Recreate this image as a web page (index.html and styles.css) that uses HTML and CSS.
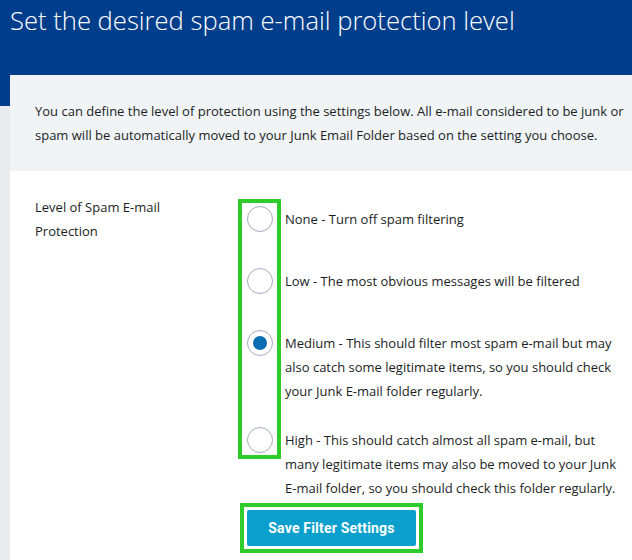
FILE: index.html
```html
<!DOCTYPE html>
<html lang="en">
<head>
<meta charset="utf-8">
<title>Spam protection level</title>
<link rel="stylesheet" href="styles.css">
</head>
<body>
<header class="page-header">
  <h1 class="page-title">Set the desired spam e-mail protection level</h1>
</header>
<main class="card">
  <section class="intro">
    <p>You can define the level of protection using the settings below. All e-mail considered to be junk or spam will be automatically moved to your Junk Email Folder based on the setting you choose.</p>
  </section>
  <form class="form">
    <div class="form-label">Level of Spam E-mail Protection</div>
    <div class="form-field">
      <div class="options">
        <span class="highlight highlight-radios"></span>
        <label class="option">
          <span class="radio-cell"><input type="radio" name="level" class="radio"></span>
          <span class="option-text">None - Turn off spam filtering</span>
        </label>
        <label class="option">
          <span class="radio-cell"><input type="radio" name="level" class="radio"></span>
          <span class="option-text">Low - The most obvious messages will be filtered</span>
        </label>
        <label class="option">
          <span class="radio-cell"><input type="radio" name="level" class="radio" checked></span>
          <span class="option-text">Medium - This should filter most spam e-mail but may also catch some legitimate items, so you should check your Junk E-mail folder regularly.</span>
        </label>
        <label class="option">
          <span class="radio-cell"><input type="radio" name="level" class="radio"></span>
          <span class="option-text">High - This should catch almost all spam e-mail, but many legitimate items may also be moved to your Junk E-mail folder, so you should check this folder regularly.</span>
        </label>
      </div>
      <div class="button-frame">
        <button type="button" class="save-btn">Save Filter Settings</button>
      </div>
    </div>
  </form>
</main>
</body>
</html>
```
FILE: styles.css
```css
html, body {
  margin: 0;
  padding: 0;
}
body {
  background: linear-gradient(#003e8c 0, #003e8c 106px, #e9ecef 106px);
  font-family: "Open Sans", "Liberation Sans", sans-serif;
  color: #1b1e24;
  min-height: 560px;
}
.page-header {
  height: 75px;
  box-sizing: border-box;
  padding: 3px 0 0 10px;
}
.page-title {
  margin: 0;
  color: #ffffff;
  font-family: "Open Sans", sans-serif;
  font-weight: 300;
  font-size: 25.6px;
  line-height: 36px;
  letter-spacing: 0;
}
.card {
  margin-left: 10px;
  background: #ffffff;
  min-height: 485px;
}
.intro {
  background: #f1f4f7;
  padding: 24px 2px 24px 25px;
}
.intro p {
  margin: 0;
  font-size: 13px;
  line-height: 24px;
}
.form {
  display: flex;
  padding: 24px 0 0 25px;
  font-size: 13px;
  line-height: 24px;
}
.form-label {
  width: 203px;
  flex: none;
  padding-right: 50px;
  box-sizing: border-box;
}
.form-field {
  display: flex;
  flex-direction: column;
  padding-top: 12px;
}
.options {
  position: relative;
  display: flex;
  flex-direction: column;
  gap: 25px;
}
.option {
  display: flex;
  align-items: flex-start;
  min-height: 37px;
  cursor: pointer;
}
.radio-cell {
  width: 43px;
  flex: none;
  display: flex;
  justify-content: center;
  margin-right: 4px;
}
.radio {
  appearance: none;
  -webkit-appearance: none;
  margin: 0;
  width: 26px;
  height: 26px;
  border: 1.5px solid #a3abba;
  border-radius: 50%;
  background: #ffffff;
  box-sizing: border-box;
  display: grid;
  place-content: center;
  margin-top: -1px;
}
.radio:checked::before {
  content: "";
  width: 14px;
  height: 14px;
  border-radius: 50%;
  background: #0a6db3;
}
.option-text {
  width: 336px;
}
.highlight {
  position: absolute;
  border: 4px solid #2ecb2b;
  pointer-events: none;
}
.highlight-radios {
  left: 0;
  top: -8px;
  width: 35px;
  height: 252px;
}
.button-frame {
  align-self: flex-start;
  margin: 3px 0 0 2px;
  border: 4px solid #2ecb2b;
  padding: 3px;
}
.save-btn {
  display: block;
  width: 169px;
  height: 36px;
  border: 0;
  border-radius: 2px;
  background: #0b9fcd;
  color: #ffffff;
  font-family: Roboto, "Liberation Sans", sans-serif;
  font-weight: 700;
  font-size: 14px;
  letter-spacing: 0.2px;
  cursor: pointer;
}
```
